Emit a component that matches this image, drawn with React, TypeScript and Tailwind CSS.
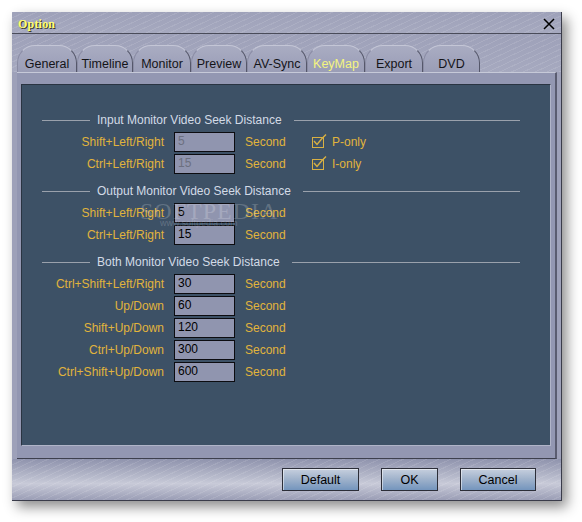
import React from 'react';

const metal =
  '[background-image:repeating-linear-gradient(155deg,rgba(255,255,255,0.10)_0px,rgba(255,255,255,0.10)_1px,transparent_1px,transparent_5px),linear-gradient(180deg,#9ea1b9,#a6a9bf)]';

const tabs = ['General', 'Timeline', 'Monitor', 'Preview', 'AV-Sync', 'KeyMap', 'Export', 'DVD'];
const tabWidths = [60, 56, 58, 56, 60, 58, 58, 57];

interface Row {
  label: string;
  value: string;
  disabled?: boolean;
  check?: string;
}

const sections: { title: string; rows: Row[] }[] = [
  {
    title: 'Input Monitor Video Seek Distance',
    rows: [
      { label: 'Shift+Left/Right', value: '5', disabled: true, check: 'P-only' },
      { label: 'Ctrl+Left/Right', value: '15', disabled: true, check: 'I-only' },
    ],
  },
  {
    title: 'Output Monitor Video Seek Distance',
    rows: [
      { label: 'Shift+Left/Right', value: '5' },
      { label: 'Ctrl+Left/Right', value: '15' },
    ],
  },
  {
    title: 'Both Monitor Video Seek Distance',
    rows: [
      { label: 'Ctrl+Shift+Left/Right', value: '30' },
      { label: 'Up/Down', value: '60' },
      { label: 'Shift+Up/Down', value: '120' },
      { label: 'Ctrl+Up/Down', value: '300' },
      { label: 'Ctrl+Shift+Up/Down', value: '600' },
    ],
  },
];

const CheckMark = () => (
  <svg width="16" height="14" viewBox="0 0 16 14" className="shrink-0">
    <rect x="0.5" y="3.5" width="11" height="10" fill="none" stroke="#d9b043" strokeWidth="1" />
    <path d="M2 7 L5 10.5 L10 4.5 M10 4.5 L14 0.5" fill="none" stroke="#d9b043" strokeWidth="1.4" />
  </svg>
);

const Button = ({ label, w }: { label: string; w: string }) => (
  <button
    className={`${w} h-[23px] border border-[#2c2e38] text-[12.5px] text-black pt-[1px] [background-image:linear-gradient(180deg,#c6cfde_0%,#a2b4cc_45%,#7495bd_100%)] shadow-[inset_1px_1px_0_rgba(255,255,255,0.5)]`}
  >
    {label}
  </button>
);

export default function App() {
  return (
    <div className="min-h-[522px] bg-white pl-[12px] pt-[12px] font-['Liberation_Sans',Arial,sans-serif]">
      <div className="w-[550px] h-[489px] flex flex-col border-r border-b border-[#3a3c4a] shadow-[5px_6px_12px_rgba(0,0,0,0.45)] bg-[#9ea1b9]">
        {/* Title bar */}
        <div className={`h-[22px] shrink-0 flex items-center justify-between pl-[6px] pr-[6px] pt-[3px] border-b border-[#4a4c5a] ${metal}`}>
          <span className="font-['Liberation_Serif',serif] font-bold text-[12px] text-[#ffff70] [text-shadow:1px_1px_0_#3a3a30] tracking-[0.2px]">
            Option
          </span>
          <svg width="12" height="12" viewBox="0 0 12 12" className="mb-[1px]">
            <path d="M1 1 L11 11 M11 1 L1 11" stroke="#000" strokeWidth="1.5" />
          </svg>
        </div>

        {/* Tabs */}
        <div className={`h-[38px] shrink-0 flex items-end pl-[5px] ${metal}`}>
          {tabs.map((t, i) => (
            <div
              key={t}
              style={{ width: tabWidths[i] }}
              className={`h-[27px] flex items-center justify-center pt-[10px] text-[12.5px] rounded-t-[18px] border-t border-l border-r border-t-[#c4c6d6] border-l-[#8a8ca4] border-r-[#55576a] [background-image:linear-gradient(180deg,#a9acc2,#9a9db6)] ${
                t === 'KeyMap' ? 'text-[#f4f480]' : 'text-[#141418]'
              }`}
            >
              {t}
            </div>
          ))}
        </div>

        {/* Tab panel */}
        <div className="h-[387px] shrink-0 ml-[5px] w-[540px] bg-[#9397b2] border-t border-t-[#c6c9d8] border-r-2 border-r-[#5a5c70] border-b border-b-[#3e404e] pl-[4px] pt-[11px]">
          <div className="relative w-[530px] h-[362px] bg-[#3d5166] border-t border-l border-[#2a3442] border-r border-r-[#b0b4c8] border-b border-b-[#b0b4c8] pl-[20px] pr-[30px] pt-[28px] text-[12px]">
            {sections.map((s, si) => (
              <div key={s.title} className={si === 0 ? '' : 'mt-[10px]'}>
                <div className="h-[14px] flex items-center">
                  <div className="w-[48px] h-px bg-[#9aa1ac]" />
                  <span className="ml-[7px] mr-[12px] text-[#d3dbe6] leading-[14px] whitespace-nowrap">{s.title}</span>
                  <div className="flex-1 h-px bg-[#9aa1ac]" />
                </div>
                <div className="mt-[5px] flex flex-col gap-[2px]">
                  {s.rows.map((r) => (
                    <div key={r.label + r.value} className="h-[20px] flex items-center">
                      <span className="w-[122px] text-right text-[#e1b43c] whitespace-nowrap">{r.label}</span>
                      <div
                        className={`ml-[10px] w-[61px] h-[20px] border border-[#0c0c10] bg-[#9095af] pl-[3px] leading-[16px] ${
                          r.disabled ? 'text-[#6c7080]' : 'text-black'
                        }`}
                      >
                        {r.value}
                      </div>
                      <span className="ml-[10px] w-[67px] text-[#e1b43c]">Second</span>
                      {r.check && (
                        <div className="flex items-center gap-[4px] -mt-[3px]">
                          <CheckMark />
                          <span className="text-[#e1b43c] mt-[3px]">{r.check}</span>
                        </div>
                      )}
                    </div>
                  ))}
                </div>
              </div>
            ))}
            {/* watermark */}
            <div className="absolute left-[118px] top-[108px] font-['Liberation_Serif',serif] text-[24px] tracking-[1px] text-white/20 pointer-events-none">
              SOFTPEDIA
            </div>
            <div className="absolute left-[138px] top-[132px] text-[9px] text-white/20 pointer-events-none">
              www.softpedia.com
            </div>
          </div>
        </div>

        {/* Bottom bar */}
        <div className="flex-1 flex items-start pt-[9px] pl-[270px] gap-[22px] [background-image:repeating-linear-gradient(155deg,rgba(255,255,255,0.10)_0px,rgba(255,255,255,0.10)_1px,transparent_1px,transparent_5px),linear-gradient(180deg,#8f93ad_0%,#b8bbcc_45%,#c8cad8_60%,#9a9db5_100%)]">
          <Button label="Default" w="w-[77px]" />
          <Button label="OK" w="w-[57px]" />
          <Button label="Cancel" w="w-[76px]" />
        </div>
      </div>
    </div>
  );
}
